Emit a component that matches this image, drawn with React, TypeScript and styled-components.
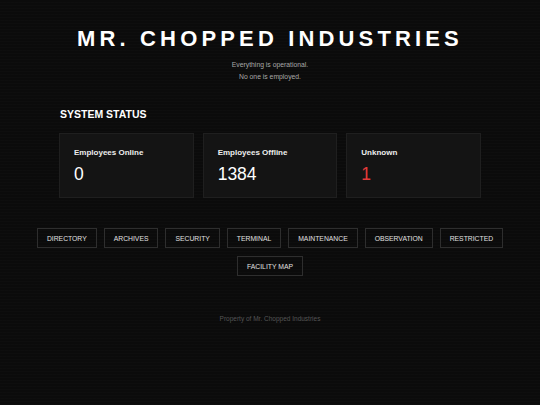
import React from "react";
import styled, { createGlobalStyle } from "styled-components";

const Global = createGlobalStyle`
  html, body { margin: 0; padding: 0; }
  body {
    background-color: #0b0b0b;
    background-image: repeating-linear-gradient(0deg, rgba(255,255,255,0.012) 0px, rgba(255,255,255,0.012) 1px, transparent 1px, transparent 3px);
    min-height: 405px;
    font-family: "Liberation Sans", Arial, sans-serif;
    color: #fff;
  }
`;

const Page = styled.div`
  display: flex;
  flex-direction: column;
  align-items: center;
  padding-top: 26px;
`;

const Title = styled.h1`
  margin: 0;
  font-size: 22px;
  font-weight: 700;
  letter-spacing: 4.15px;
  line-height: 26px;
  color: #fff;
`;

const Sub = styled.p`
  margin: 0;
  font-size: 6.8px;
  line-height: 12px;
  color: #a8a8a8;
  &:first-of-type { margin-top: 7px; }
`;

const Section = styled.section`
  width: 422px;
  margin-top: 25px;
`;

const SectionTitle = styled.h2`
  margin: 0 0 12px 1px;
  font-size: 10.5px;
  font-weight: 700;
  line-height: 13px;
`;

const Cards = styled.div`
  display: grid;
  grid-template-columns: repeat(3, 1fr);
  gap: 9px;
`;

const Card = styled.div`
  background: #141414;
  border: 1px solid #1f1f1f;
  height: 65px;
  padding: 14px 14px 0;
  box-sizing: border-box;
`;

const CardLabel = styled.div`
  font-size: 8px;
  font-weight: 700;
  color: #eee;
  line-height: 10px;
`;

const CardValue = styled.div<{ $alert?: boolean }>`
  margin-top: 6px;
  font-size: 17.5px;
  line-height: 20px;
  color: ${(p) => (p.$alert ? "#e23a3a" : "#fff")};
`;

const Nav = styled.nav`
  width: 480px;
  margin-top: 30px;
  display: flex;
  flex-wrap: wrap;
  justify-content: center;
  gap: 8px 7px;
`;

const NavButton = styled.button`
  background: transparent;
  border: 1px solid #2e2e2e;
  color: #e0e0e0;
  font-family: "Liberation Sans", Arial, sans-serif;
  font-size: 6.8px;
  height: 20px;
  padding: 0 9px;
  cursor: pointer;
`;

const Footer = styled.footer`
  margin-top: 39px;
  font-size: 6.5px;
  color: #555;
`;

const links = [
  "DIRECTORY",
  "ARCHIVES",
  "SECURITY",
  "TERMINAL",
  "MAINTENANCE",
  "OBSERVATION",
  "RESTRICTED",
  "FACILITY MAP",
];

export default function App() {
  return (
    <>
      <Global />
      <Page>
        <Title>MR. CHOPPED INDUSTRIES</Title>
        <Sub>Everything is operational.</Sub>
        <Sub>No one is employed.</Sub>
        <Section>
          <SectionTitle>SYSTEM STATUS</SectionTitle>
          <Cards>
            <Card>
              <CardLabel>Employees Online</CardLabel>
              <CardValue>0</CardValue>
            </Card>
            <Card>
              <CardLabel>Employees Offline</CardLabel>
              <CardValue>1384</CardValue>
            </Card>
            <Card>
              <CardLabel>Unknown</CardLabel>
              <CardValue $alert>1</CardValue>
            </Card>
          </Cards>
        </Section>
        <Nav>
          {links.map((l) => (
            <NavButton key={l}>{l}</NavButton>
          ))}
        </Nav>
        <Footer>Property of Mr. Chopped Industries</Footer>
      </Page>
    </>
  );
}
